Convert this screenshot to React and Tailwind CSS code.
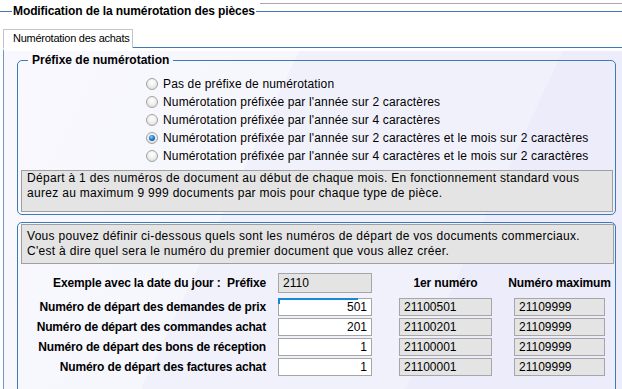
import React from 'react';

const BLUE = 'border-[#3d7ab6]';

const options = [
  'Pas de préfixe de numérotation',
  "Numérotation préfixée par l'année sur 2 caractères",
  "Numérotation préfixée par l'année sur 4 caractères",
  "Numérotation préfixée par l'année sur 2 caractères et le mois sur 2 caractères",
  "Numérotation préfixée par l'année sur 4 caractères et le mois sur 2 caractères",
];

const rows = [
  { label: 'Numéro de départ des demandes de prix', start: '501', first: '21100501', focus: true },
  { label: 'Numéro de départ des commandes achat', start: '201', first: '21100201' },
  { label: 'Numéro de départ des bons de réception', start: '1', first: '21100001' },
  { label: 'Numéro de départ des factures achat', start: '1', first: '21100001' },
];

function Radio({ checked }) {
  return (
    <span className="w-[12px] h-[12px] rounded-full border border-[#a3a3a3] bg-[radial-gradient(circle_at_50%_35%,#ffffff_0%,#f0f0f0_45%,#d4d4d4_100%)] flex items-center justify-center shrink-0">
      {checked && (
        <span className="w-[6px] h-[6px] rounded-full bg-[radial-gradient(circle_at_40%_35%,#8fd0ff_0%,#1c7fd0_45%,#0b3f7a_100%)]" />
      )}
    </span>
  );
}

function GrayBox({ children, className = '' }) {
  return (
    <div className={`h-[18px] border border-[#a6a6a6] bg-[#e4e4e4] pl-[4px] leading-[16px] ${className}`}>
      {children}
    </div>
  );
}

export default function App() {
  return (
    <div className="w-[622px] h-[389px] overflow-hidden bg-white font-['Liberation_Sans',Arial,sans-serif] text-[12px] text-black">
      <div className="ml-[260px] mt-[3px] h-px bg-[#a9a9a9]" />

      {/* section title */}
      <div className="flex items-center h-[15px]">
        <div className="w-[12px] h-px bg-[#3d7ab6]" />
        <span className="font-bold text-[12px] px-[1px] leading-[15px] tracking-[-0.1px]">Modification de la numérotation des pièces</span>
        <div className="flex-1 h-px bg-[#3d7ab6]" />
      </div>

      {/* tab strip */}
      <div className="flex items-end mt-[10px] h-[19px]">
        <div className="ml-[3px] w-[130px] h-[19px] border-l border-t border-r border-[#c4c4c4] bg-white pl-[9px] text-[11px] leading-[16px] whitespace-nowrap tracking-[-0.25px]">
          Numérotation des achats
        </div>
        <div className="flex-1 h-px bg-[#3d7ab6]" />
      </div>

      {/* tab page */}
      <div className="ml-[3px] h-[342px] border-l border-[#6f97c4] border-t-[3px] border-t-white bg-[linear-gradient(115deg,#f8f8fe_0%,#f6f6fd_38%,#f1f1fc_38%,#f1f1fc_72%,#ececfa_72%,#ececfa_100%)] pl-[13px] pt-[2px]">
        <fieldset className={`w-[599px] border ${BLUE} rounded-[5px] pl-[3px] pr-[2px] pb-[2px]`}>
          <legend className="ml-[7px] px-[4px] font-bold text-[12px] leading-[15px]">Préfixe de numérotation</legend>
          <div className="ml-[125px] mt-[7px] flex flex-col tracking-[0.15px]">
            {options.map((o, i) => (
              <div key={o} className="h-[18px] flex items-center gap-[5px]">
                <Radio checked={i === 3} />
                <span className="leading-[15px] whitespace-nowrap">{o}</span>
              </div>
            ))}
          </div>
          <div className="mt-[5px] h-[42px] border border-[#a0a0a0] bg-[#e4e4e4] pl-[5px] leading-[15px] tracking-[0.3px] whitespace-nowrap">
            Départ à 1 des numéros de document au début de chaque mois. En fonctionnement standard vous
            <br />
            aurez au maximum 9 999 documents par mois pour chaque type de pièce.
          </div>
        </fieldset>

        <div className={`mt-[7px] w-[599px] h-[200px] border ${BLUE} rounded-[5px] pt-[1px] pl-[3px] pr-[1px]`}>
          <div className="h-[40px] border border-[#a0a0a0] bg-[#e4e4e4] pl-[5px] pt-[4px] leading-[15px] tracking-[0.3px] whitespace-nowrap">
            Vous pouvez définir ci-dessous quels sont les numéros de départ de vos documents commerciaux.
            <br />
            C'est à dire quel sera le numéro du premier document que vous allez créer.
          </div>

          <div className="mt-[9px] flex items-center h-[20px]">
            <div className="w-[245px] text-right font-bold tracking-[-0.15px] whitespace-nowrap">Exemple avec la date du jour :&nbsp; Préfixe</div>
            <GrayBox className="ml-[12px] w-[94px] h-[20px] leading-[18px]">2110</GrayBox>
            <div className="ml-[27px] w-[93px] flex justify-center font-bold whitespace-nowrap tracking-[-0.15px]">1er numéro</div>
            <div className="ml-[22px] w-[91px] flex justify-center font-bold whitespace-nowrap tracking-[-0.15px]">Numéro maximum</div>
          </div>

          <div className="mt-[5px] flex flex-col gap-[2px]">
            {rows.map((r) => (
              <div key={r.label} className="flex items-center h-[18px]">
                <div className="w-[245px] text-right font-bold tracking-[-0.15px] whitespace-nowrap">{r.label}</div>
                <div className="relative ml-[12px] w-[94px] h-[18px] border border-[#a6a6a6] bg-white pr-[4px] text-right leading-[16px]">
                  {r.start}
                  {r.focus && (
                    <>
                      <span className="absolute -top-px -left-px w-[80px] h-[2px] bg-[#1a86d6]" />
                      <span className="absolute -top-px -left-px w-[2px] h-[6px] bg-[#1a86d6]" />
                    </>
                  )}
                </div>
                <GrayBox className="ml-[27px] w-[93px]">{r.first}</GrayBox>
                <GrayBox className="ml-[22px] w-[91px]">21109999</GrayBox>
              </div>
            ))}
          </div>
        </div>
      </div>
    </div>
  );
}
